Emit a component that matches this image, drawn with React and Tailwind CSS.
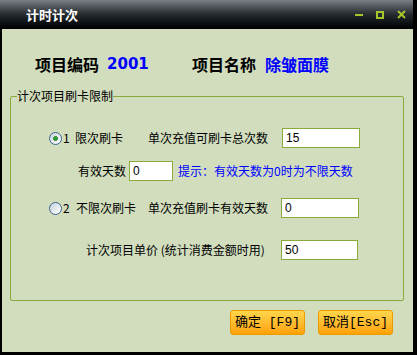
import React from "react";

const cjk = { fontFamily: '"Noto Sans CJK SC", "Liberation Sans", sans-serif' };
const mono = { fontFamily: '"Liberation Mono", "Noto Sans CJK SC", monospace' };

const Radio = ({ checked }) => (
  <div className="w-[13px] h-[13px] rounded-full border border-[#3a6690] bg-linear-to-br from-[#c9d3dd] to-white flex items-center justify-center">
    {checked && <div className="w-[5px] h-[5px] rounded-full bg-[#2ea52e] border border-[#1f7f1f]" />}
  </div>
);

const Field = ({ value, width }) => (
  <div
    className={`${width} h-[20px] bg-white border border-[#8aab3c] flex items-center pl-[3px] text-[12px] text-black`}
    style={{ fontFamily: '"Liberation Sans", sans-serif' }}
  >
    {value}
  </div>
);

const OrangeButton = ({ children }) => (
  <button
    className="w-[75px] h-[25px] rounded-[3px] border border-[#eb9a00] bg-linear-to-b from-[#ffd64a] to-[#ffa200] text-[13px] text-black flex items-center justify-center"
    style={mono}
  >
    {children}
  </button>
);

const App = () => {
  return (
    <div className="w-[417px] h-[355px] bg-black overflow-hidden" style={cjk}>
      <div className="w-[413px] h-[352px] flex flex-col">
        {/* title bar */}
        <div className="h-[29px] bg-linear-to-b from-[#7a7f85] via-[#262b30] to-[#020304] flex items-center justify-between pl-[26px] pr-[7px]">
          <span className="text-white font-bold text-[13px]">计时计次</span>
          <div className="flex items-center gap-[13px]">
            <div className="w-[8px] h-[2px] bg-[#a6c72c] mt-[1px]" />
            <div className="w-[8px] h-[8px] border-2 border-[#a6c72c]" />
            <svg width="9" height="9" viewBox="0 0 9 9">
              <path d="M1 1 L8 8 M8 1 L1 8" stroke="#a6c72c" strokeWidth="2" />
            </svg>
          </div>
        </div>

        {/* body */}
        <div className="flex-1 bg-[#d1ddbd] border-l-2 border-black flex flex-col">
          <div className="flex items-center pl-[33px] pt-[25px] h-[45px]">
            <div className="w-[157px] flex items-center">
              <span className="text-[16px] font-bold text-black leading-[20px]">项目编码</span>
              <span
                className="ml-[8px] text-[15px] font-bold text-[#0000ff] leading-[20px]"
                style={{ fontFamily: '"DejaVu Sans", sans-serif' }}
              >
                2001
              </span>
            </div>
            <span className="text-[16px] font-bold text-black leading-[20px]">项目名称</span>
            <span className="ml-[9px] text-[16px] font-bold text-[#0000ff] leading-[20px]">除皱面膜</span>
          </div>

          <fieldset className="mt-[14px] ml-[8px] w-[394px] h-[213px] border border-[#8aab3c] rounded-[2px] text-[12px] text-black">
            <legend className="ml-[6px] leading-[16px]">计次项目刷卡限制</legend>

            <div className="mt-[24px] h-[20px] flex items-center pl-[38px]">
              <div className="w-[26px] flex items-center">
                <Radio checked />
                <span className="ml-[1px]">1</span>
              </div>
              <span className="w-[73px]">限次刷卡</span>
              <span className="w-[134px]">单次充值可刷卡总次数</span>
              <Field value="15" width="w-[78px]" />
            </div>

            <div className="mt-[13px] h-[20px] flex items-center pl-[67px]">
              <span className="w-[51px]">有效天数</span>
              <Field value="0" width="w-[44px]" />
              <span className="ml-[5px] text-[#0000ff]">提示：有效天数为0时为不限天数</span>
            </div>

            <div className="mt-[17px] h-[20px] flex items-center pl-[38px]">
              <div className="w-[27px] flex items-center">
                <Radio />
                <span className="ml-[1px]">2</span>
              </div>
              <span className="w-[72px]">不限次刷卡</span>
              <span className="w-[133px]">单次充值刷卡有效天数</span>
              <Field value="0" width="w-[78px]" />
            </div>

            <div className="mt-[22px] h-[20px] flex items-center pl-[75px]">
              <span className="w-[195px]">计次项目单价 (统计消费金额时用)</span>
              <Field value="50" width="w-[77px]" />
            </div>
          </fieldset>

          <div className="mt-[9px] flex justify-end gap-[13px] pr-[20px]">
            <OrangeButton>确定 [F9]</OrangeButton>
            <OrangeButton>取消[Esc]</OrangeButton>
          </div>
        </div>
      </div>
    </div>
  );
};

export default App;
